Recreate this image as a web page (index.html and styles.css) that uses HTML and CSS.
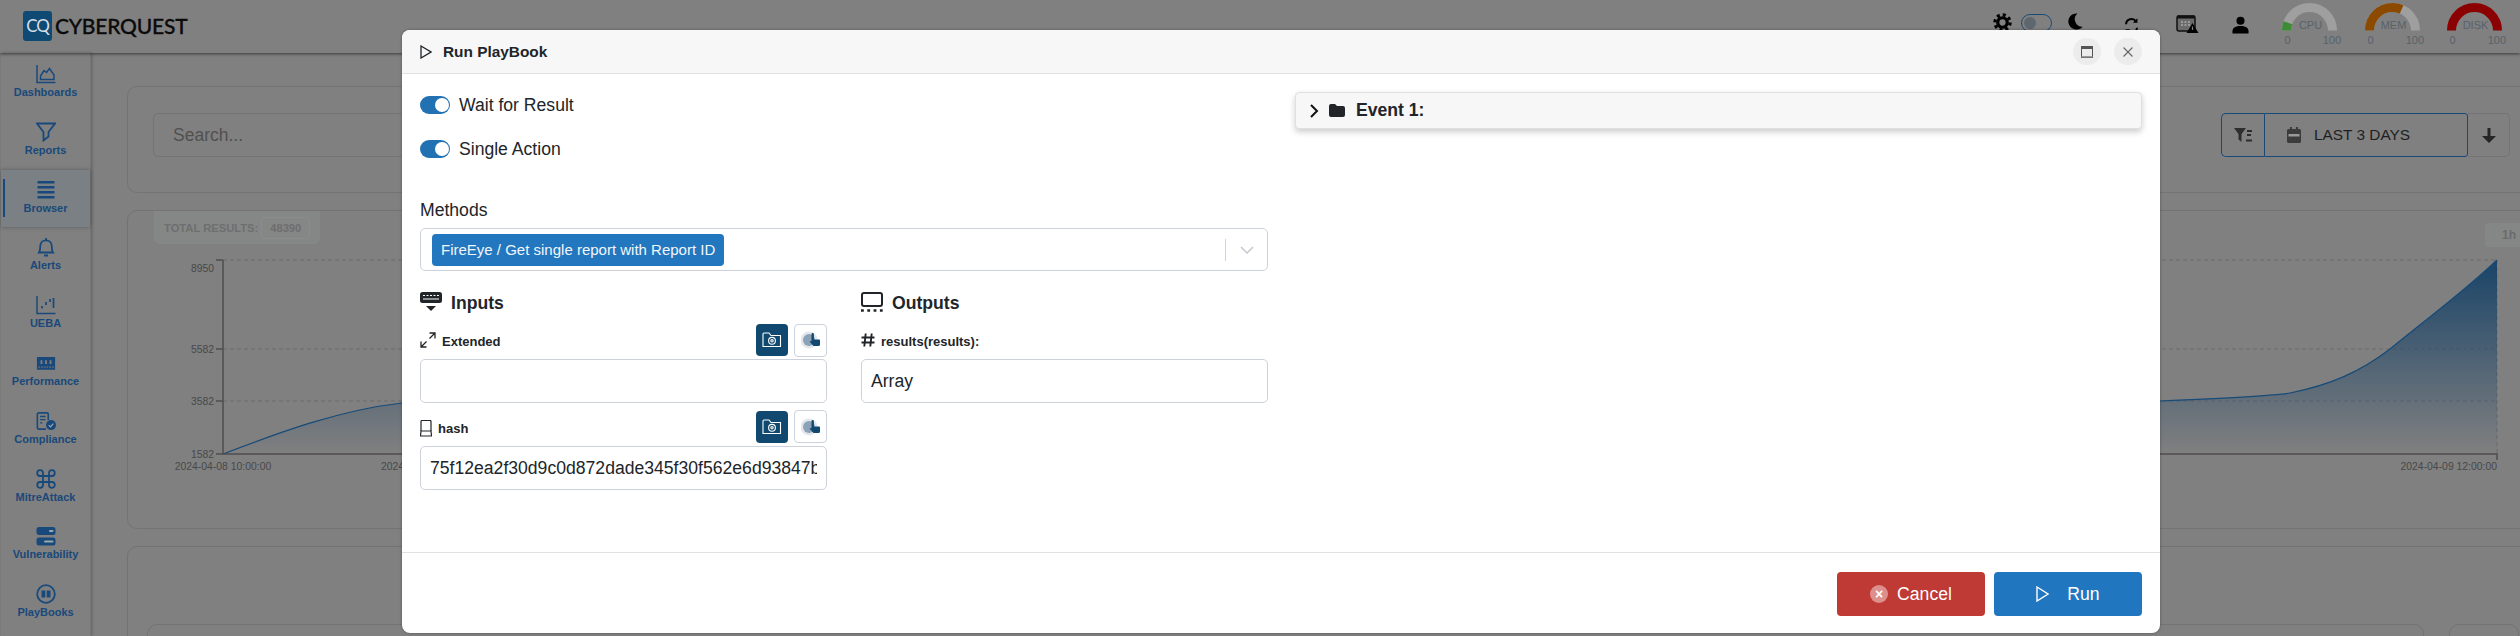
FILE: index.html
```html
<!DOCTYPE html>
<html lang="en">
<head>
<meta charset="utf-8">
<title>CyberQuest</title>
<link rel="stylesheet" href="styles.css">
</head>
<body>
<div class="app">
  <header class="topbar">
    <div class="brand">
      <div class="brand-mark">CQ</div>
      <div class="brand-name">CYBERQUEST</div>
    </div>
    <div class="tools">
      <svg class="tool gear" viewBox="0 0 20 20"><circle cx="10" cy="10" r="5" fill="none" stroke="#000" stroke-width="3.4"/><circle cx="10" cy="10" r="8" fill="none" stroke="#000" stroke-width="3.4" stroke-dasharray="3.2 3.08"/></svg>
      <div class="theme-switch"><span class="theme-knob"></span></div>
      <svg class="tool moon" viewBox="0 0 16 18"><path d="M10 0.500A8.600 8.600 0 1 0 15.600 14.500A8 8 0 0 1 10 0.500Z" fill="#000"/></svg>
      <svg class="tool refresh" viewBox="0 0 16 22" fill="none" stroke="#000" stroke-width="2.2"><path d="M2 9A6 6 0 0 1 13 6"/><path d="M14 13A6 6 0 0 1 3 16"/><path d="M14.500 2.500V7.500H9.500Z" fill="#000" stroke="none"/><path d="M1.500 19.500V14.500H6.500Z" fill="#000" stroke="none"/></svg>
      <svg class="tool cal-alert" viewBox="0 0 23 19"><rect x="1" y="2" width="18" height="15" rx="2" fill="#6b6b6b" stroke="#111" stroke-width="1.5"/><rect x="1" y="1.500" width="18" height="3" fill="#111"/><path d="M5 8h2M8.500 8h2M12 8h2M5 11h2M8.500 11h2M12 11h2" stroke="#aaa" stroke-width="1.500"/><path d="M16.500 9L22.500 19H10.500Z" fill="#000"/><path d="M16.500 12.500V16" stroke="#808080" stroke-width="1.200"/></svg>
      <svg class="tool user" viewBox="0 0 18 18"><circle cx="9" cy="4.500" r="4.300"/><path d="M0.500 18V15.500C0.500 11.500 4 10 9 10S17.500 11.500 17.500 15.500V18Z"/></svg>
      <svg class="gauge gauge-cpu" viewBox="0 0 60 46"><path class="gauge-track" d="M4.500 27.500A23 23 0 0 1 50.500 27.500"/><path class="gauge-cpu-v" d="M4.500 27.500A23 23 0 0 1 50.500 27.500" pathLength="100" stroke-dasharray="11 100"/><text class="gauge-label" x="28.500" y="26" text-anchor="middle">CPU</text><text class="gauge-tick" x="5.500" y="41" text-anchor="middle">0</text><text class="gauge-tick" x="59" y="41" text-anchor="end">100</text></svg>
      <svg class="gauge gauge-mem" viewBox="0 0 60 46"><path class="gauge-track" d="M4.500 27.500A23 23 0 0 1 50.500 27.500"/><path class="gauge-mem-v" d="M4.500 27.500A23 23 0 0 1 50.500 27.500" pathLength="100" stroke-dasharray="63 100"/><text class="gauge-label" x="28.500" y="26" text-anchor="middle">MEM</text><text class="gauge-tick" x="5.500" y="41" text-anchor="middle">0</text><text class="gauge-tick" x="59" y="41" text-anchor="end">100</text></svg>
      <svg class="gauge gauge-disk" viewBox="0 0 60 46"><path class="gauge-disk-v" d="M4.500 27.500A23 23 0 0 1 50.500 27.500"/><text class="gauge-label" x="28.500" y="26" text-anchor="middle">DISK</text><text class="gauge-tick" x="5.500" y="41" text-anchor="middle">0</text><text class="gauge-tick" x="59" y="41" text-anchor="end">100</text></svg>
    </div>
  </header>

  <div class="workspace">
    <nav class="sidebar">
      <a class="nav-item">
        <svg class="nav-icon" viewBox="0 0 20 20" fill="none" stroke="currentColor" stroke-width="1.500"><path d="M1 1V18.500H19.500"/><path d="M4.500 15.500V12L8 6.500L10.500 8.500L13.500 4.500L18 11V15.500Z"/></svg>
        <span class="nav-label">Dashboards</span>
      </a>
      <a class="nav-item">
        <svg class="nav-icon" viewBox="0 0 20 20" fill="none" stroke="currentColor" stroke-width="1.800"><path d="M1 1.500H19L12.500 10V14.500L7.500 18.500V10Z"/></svg>
        <span class="nav-label">Reports</span>
      </a>
      <a class="nav-item nav-active">
        <svg class="nav-icon" viewBox="0 0 20 20" fill="currentColor"><rect x="1.500" y="1" width="17" height="2.500"/><rect x="1.500" y="6" width="17" height="2.500"/><rect x="1.500" y="11" width="17" height="2.500"/><rect x="1.500" y="16" width="17" height="2.500"/></svg>
        <span class="nav-label">Browser</span>
      </a>
      <a class="nav-item">
        <svg class="nav-icon" viewBox="0 0 20 20" fill="none" stroke="currentColor" stroke-width="1.800"><path d="M3 15.500C4.500 13.500 4 11 4.300 8.500C4.600 5.500 7 3.300 10 3.300S15.400 5.500 15.700 8.500C16 11 15.500 13.500 17 15.500Z"/><path d="M10 1V3" /><path d="M8 18.500H12" stroke-width="2"/></svg>
        <span class="nav-label">Alerts</span>
      </a>
      <a class="nav-item">
        <svg class="nav-icon" viewBox="0 0 20 20" fill="none" stroke="currentColor" stroke-width="1.500"><path d="M1 1V18.500H19.500"/><path d="M6 11V13.500M10 7V10M14 4V7M17.500 3V13" stroke-width="1.700"/></svg>
        <span class="nav-label">UEBA</span>
      </a>
      <a class="nav-item">
        <svg class="nav-icon" viewBox="0 0 22 20"><path d="M1 3.500H21V9.500A2 2 0 0 0 21 11V17.500H1V11A2 2 0 0 0 1 9.500Z" fill="currentColor"/><path d="M5 7H7V11H5ZM10 7H12V11H10ZM15 7H17V11H15Z" fill="#808080"/><path d="M2.500 14.500H19.500" stroke="#808080" stroke-width="1" stroke-dasharray="2 1"/></svg>
        <span class="nav-label">Performance</span>
      </a>
      <a class="nav-item">
        <svg class="nav-icon" viewBox="0 0 22 20"><path d="M11 19H3A1.500 1.500 0 0 1 1.500 17.500V2.500A1.500 1.500 0 0 1 3 1H12A1.500 1.500 0 0 1 13.500 2.500V9" fill="none" stroke="currentColor" stroke-width="1.800"/><path d="M4.500 5H10.500M4.500 8.500H10.500M4.500 12H7" stroke="currentColor" stroke-width="1.500"/><circle cx="16.500" cy="14.500" r="5.500" fill="currentColor"/><path d="M14 14.500L16 16.500L19 13" fill="none" stroke="#9aa" stroke-width="1.300"/></svg>
        <span class="nav-label">Compliance</span>
      </a>
      <a class="nav-item">
        <svg class="nav-icon" viewBox="0 0 20 20" fill="none" stroke="currentColor" stroke-width="1.800"><path d="M7 7V3.800A2.900 2.900 0 1 0 4 7H16A2.900 2.900 0 1 0 13 3.800V16.200A2.900 2.900 0 1 0 16 13H4A2.900 2.900 0 1 0 7 16.200Z"/></svg>
        <span class="nav-label">MitreAttack</span>
      </a>
      <a class="nav-item">
        <svg class="nav-icon" viewBox="0 0 20 20"><rect x="0.500" y="1" width="19" height="8" rx="2.500" fill="currentColor"/><rect x="0.500" y="11.500" width="19" height="8" rx="2.500" fill="currentColor"/><rect x="13" y="4" width="4.500" height="2" rx="1" fill="#9aa"/><rect x="8" y="14.500" width="9.500" height="2" rx="1" fill="#9aa"/></svg>
        <span class="nav-label">Vulnerability</span>
      </a>
      <a class="nav-item">
        <svg class="nav-icon" viewBox="0 0 20 20"><circle cx="10" cy="10" r="8.800" fill="none" stroke="currentColor" stroke-width="1.800"/><path d="M5.500 6.500H9.300V13.500H5.500ZM10.700 6.500H14.500V13.500H10.700Z" fill="currentColor"/></svg>
        <span class="nav-label">PlayBooks</span>
      </a>
    </nav>

    <main class="content">
      <section class="card card-search">
        <div class="search-box">Search...</div>
        <div class="range-group">
          <div class="range-filter">
            <svg class="range-funnel" viewBox="0 0 18 14"><path d="M0 0H12L7.500 6V14L4.500 11.500V6Z" fill="#2d2d2d"/><path d="M13 3H18M13 7H17M12 12.500H18" stroke="#2d2d2d" stroke-width="1.800"/></svg>
          </div>
          <div class="range-date">
            <svg class="range-cal" viewBox="0 0 14 16"><path d="M1.500 2H3V0H5V2H9V0H11V2H12.500A1.500 1.500 0 0 1 14 3.500V14.500A1.500 1.500 0 0 1 12.500 16H1.500A1.500 1.500 0 0 1 0 14.500V3.500A1.500 1.500 0 0 1 1.500 2Z" fill="#3c3c3c"/><rect x="1.500" y="7" width="11" height="2.500" fill="#9a9a9a"/></svg>
            <span>LAST 3 DAYS</span>
          </div>
          <div class="range-down">
            <svg class="range-arrow" viewBox="0 0 14 15"><path d="M5.500 0H8.500V8H14L7 15L0 8H5.500Z" fill="#262626"/></svg>
          </div>
        </div>
      </section>

      <section class="card card-chart">
        <div class="chart-head">
          <div class="total-box"><span>TOTAL RESULTS:</span><span class="total-count">48390</span></div>
          <div class="interval">1h</div>
        </div>
        <svg class="chart" viewBox="150 250 2370 225" width="2370" height="225">
          <defs>
            <linearGradient id="areaFill" gradientUnits="userSpaceOnUse" x1="0" y1="260" x2="0" y2="454">
              <stop offset="0" stop-color="#1a4468"/>
              <stop offset="1" stop-color="#1a4468" stop-opacity="0"/>
            </linearGradient>
          </defs>
          <path class="grid" d="M223 260H2497M223 349H2497M223 401H2497M2497 260V454"/>
          <path class="area" d="M223 454C280 432 340 410 402 403L1200 402L2160 401C2230 398 2275 396 2290 393C2330 385 2360 372 2390 349C2430 316 2460 295 2497 260V454Z"/>
          <path class="line" d="M223 454C280 432 340 410 402 403L1200 402L2160 401C2230 398 2275 396 2290 393C2330 385 2360 372 2390 349C2430 316 2460 295 2497 260"/>
          <path class="axis" d="M223 260V454H2497V460M216 260H223M216 349H223M216 401H223M216 454H223"/>
          <text class="tick" x="214" y="272" text-anchor="end">8950</text>
          <text class="tick" x="214" y="353" text-anchor="end">5582</text>
          <text class="tick" x="214" y="405" text-anchor="end">3582</text>
          <text class="tick" x="214" y="458" text-anchor="end">1582</text>
          <text class="tick" x="223" y="470" text-anchor="middle">2024-04-08 10:00:00</text>
          <text class="tick" x="381" y="470">2024-04-08 14:00:00</text>
          <text class="tick" x="2497" y="470" text-anchor="end">2024-04-09 12:00:00</text>
        </svg>
      </section>

      <section class="card card-lower">
        <div class="lower-row">
          <div class="lower-main"></div>
          <div class="lower-side"></div>
        </div>
      </section>
    </main>
  </div>

  <div class="modal">
    <div class="modal-head">
      <svg class="modal-play" viewBox="0 0 12 14" fill="none" stroke="#212529" stroke-width="1.300"><path d="M1 1L11 7L1 13Z"/></svg>
      <div class="modal-title">Run PlayBook</div>
      <button class="head-btn">
        <svg class="head-icon" viewBox="0 0 12 12"><rect x="0.500" y="0.500" width="11" height="11" fill="none" stroke="#555" stroke-width="1"/><rect x="0.500" y="0.500" width="11" height="2.500" fill="#555"/><rect x="0.500" y="10" width="11" height="1.500" fill="#999"/></svg>
      </button>
      <button class="head-btn">
        <svg class="head-icon" viewBox="0 0 12 12"><path d="M1.500 1.500L10.500 10.500M10.500 1.500L1.500 10.500" stroke="#666" stroke-width="1.100"/></svg>
      </button>
    </div>
    <div class="modal-body">
      <div class="form-col">
        <div class="toggle-row"><span class="toggle"><span class="toggle-knob"></span></span><span>Wait for Result</span></div>
        <div class="toggle-row"><span class="toggle"><span class="toggle-knob"></span></span><span>Single Action</span></div>
        <div class="field-title">Methods</div>
        <div class="select">
          <span class="chip">FireEye / Get single report with Report ID</span>
          <span class="select-sep"></span>
          <svg class="select-chevron" viewBox="0 0 14 8" fill="none" stroke="#c7cbd1" stroke-width="1.600"><path d="M1 1L7 7L13 1"/></svg>
        </div>
        <div class="io-grid">
          <div>
            <div class="io-head">
              <svg class="io-icon" viewBox="0 0 22 20"><rect x="0" y="0" width="22" height="11" rx="2.500" fill="#212529"/><path d="M3 3.500H5M6.500 3.500H8.500M10 3.500H12M13.500 3.500H15.500M17 3.500H19M3 7H19" stroke="#fff" stroke-width="1.200"/><path d="M6 14H16L11 19Z" fill="#212529"/></svg>
              <span class="io-text">Inputs</span>
            </div>
            <div class="param-row">
              <svg class="param-icon" viewBox="0 0 16 16" fill="none" stroke="#212529" stroke-width="1.300"><path d="M1 15L6.500 9.500M9.500 6.500L15 1M9.500 1H15V6.500M1 9.500V15H6.500"/></svg>
              <span class="param-name">Extended</span>
              <button class="src-btn src-dark"><svg class="src-icon" viewBox="0 0 20 18" fill="none" stroke="#fff" stroke-width="1.100"><path d="M1 3V15.500H18.500V4.500H9L7 2H2A1 1 0 0 0 1 3Z"/><circle cx="10" cy="9.800" r="3.400"/><circle cx="10" cy="9.800" r="1.200"/></svg></button>
              <button class="src-btn src-light"><svg class="src-icon" viewBox="0 0 20 18"><circle cx="8" cy="9" r="8.500" fill="#e3e7ec"/><circle cx="8" cy="9" r="6" fill="#8ca2b8"/><path d="M10.500 3.300A1.200 1.200 0 0 1 12.900 3.300V8.500H18A1 1 0 0 1 19 9.500V13.500A1.500 1.500 0 0 1 17.500 15H12.500L8.500 10.500L10.500 10Z" fill="#114870"/></svg></button>
            </div>
            <input class="text-input" type="text" readonly value="">
            <div class="param-row param-next">
              <svg class="param-icon param-icon-narrow" viewBox="0 0 12 17" fill="none" stroke="#212529" stroke-width="1.200"><path d="M1 11V1.500A1 1 0 0 1 2 0.500H10A1 1 0 0 1 11 1.500V11"/><path d="M1 11H11L11.500 16H0.500Z"/></svg>
              <span class="param-name">hash</span>
              <button class="src-btn src-dark"><svg class="src-icon" viewBox="0 0 20 18" fill="none" stroke="#fff" stroke-width="1.100"><path d="M1 3V15.500H18.500V4.500H9L7 2H2A1 1 0 0 0 1 3Z"/><circle cx="10" cy="9.800" r="3.400"/><circle cx="10" cy="9.800" r="1.200"/></svg></button>
              <button class="src-btn src-light"><svg class="src-icon" viewBox="0 0 20 18"><circle cx="8" cy="9" r="8.500" fill="#e3e7ec"/><circle cx="8" cy="9" r="6" fill="#8ca2b8"/><path d="M10.500 3.300A1.200 1.200 0 0 1 12.900 3.300V8.500H18A1 1 0 0 1 19 9.500V13.500A1.500 1.500 0 0 1 17.500 15H12.500L8.500 10.500L10.500 10Z" fill="#114870"/></svg></button>
            </div>
            <input class="text-input" type="text" readonly value="75f12ea2f30d9c0d872dade345f30f562e6d93847b2c41e09a">
          </div>
          <div>
            <div class="io-head">
              <svg class="io-icon" viewBox="0 0 22 20"><rect x="1" y="1" width="20" height="13" rx="2" fill="none" stroke="#212529" stroke-width="2"/><path d="M0 18.500H22" stroke="#212529" stroke-width="2.600" stroke-dasharray="2.800 3.500"/></svg>
              <span class="io-text">Outputs</span>
            </div>
            <div class="param-row">
              <svg class="param-icon param-icon-hash" viewBox="0 0 14 14" fill="none" stroke="#212529" stroke-width="1.900"><path d="M4.700 0.500L3.300 13.500M10.700 0.500L9.300 13.500M0.500 4.500H13.500M0.500 9.500H13.500"/></svg>
              <span class="param-name">results(results):</span>
            </div>
            <input class="text-input" type="text" readonly value="Array">
          </div>
        </div>
      </div>
      <div class="event-col">
        <div class="event-panel">
          <svg class="event-chevron" viewBox="0 0 10 14" fill="none" stroke="#111" stroke-width="2"><path d="M2 1L8 7L2 13"/></svg>
          <svg class="event-folder" viewBox="0 0 16 13"><path d="M0 2A2 2 0 0 1 2 0H6L8 2H14A2 2 0 0 1 16 4V11A2 2 0 0 1 14 13H2A2 2 0 0 1 0 11Z" fill="#212529"/></svg>
          <span>Event 1:</span>
        </div>
      </div>
    </div>
    <div class="modal-foot">
      <button class="action action-cancel"><span class="cancel-dot">×</span><span>Cancel</span></button>
      <button class="action action-run">
        <svg class="run-icon" viewBox="0 0 13 16" fill="none" stroke="#fff" stroke-width="1.400"><path d="M1 1L12 8L1 15Z"/></svg>
        <span>Run</span>
      </button>
    </div>
  </div>
</div>
</body>
</html>
```

FILE: styles.css
```css
* { box-sizing: border-box; }

html, body {
  margin: 0;
  padding: 0;
  width: 2520px;
  height: 636px;
  overflow: hidden;
  background: #808080;
  font-family: "Liberation Sans", Arial, sans-serif;
}

.app {
  position: relative;
  width: 2520px;
  height: 636px;
  overflow: hidden;
  background: #808080;
}

/* top bar */
.topbar {
  display: flex;
  justify-content: space-between;
  height: 53px;
  padding: 11px 13px 0 23px;
  box-shadow: 0 1px 3px rgba(0, 0, 0, .55);
  position: relative;
  z-index: 1;
}

.brand { display: flex; height: 30px; gap: 3px; }

.brand-mark {
  width: 29px;
  height: 30px;
  border-radius: 3px;
  background: #0f4a75;
  color: #d7dfe6;
  font: 400 17px/30px "Lato", sans-serif;
  letter-spacing: -1px;
  text-align: center;
}

.brand-name {
  font: 500 21px/30px "Lato", sans-serif;
  color: #0b0b0b;
  letter-spacing: -.2px;
  -webkit-text-stroke: .3px #0b0b0b;
}

.tools { display: flex; margin-top: -11px; align-items: flex-start; }

.tool { display: block; flex: none; }
.gear { width: 19px; height: 19px; margin-top: 13px; }
.theme-switch {
  width: 31px;
  height: 18px;
  margin: 14px 0 0 9px;
  padding: 2px;
  border: 1px solid #1a4b78;
  border-radius: 9px;
}
.theme-knob {
  display: block;
  width: 12px;
  height: 12px;
  border-radius: 50%;
  background: #5e666e;
}
.moon { width: 15px; height: 17px; margin: 13px 0 0 16px; }
.refresh { width: 15px; height: 20px; margin: 16px 0 0 41px; }
.cal-alert { width: 23px; height: 19px; margin: 14px 0 0 37px; }
.user { width: 17px; height: 18px; fill: #000; margin: 16px 0 0 33px; }

.gauge { display: block; flex: none; width: 60px; height: 46px; margin-top: 3px; fill: none; }
.gauge-cpu { margin-left: 33px; }
.gauge-mem { margin-left: 23px; }
.gauge-disk { margin-left: 22px; }
.gauge-track { stroke: #9f9f9f; stroke-width: 9; }
.gauge-cpu-v { stroke: #3c8b35; stroke-width: 9; }
.gauge-mem-v { stroke: #8b4a00; stroke-width: 9; }
.gauge-disk-v { stroke: #8b0000; stroke-width: 9; }
.gauge-label, .gauge-tick { font-size: 11px; fill: #58626b; }

/* workspace */
.workspace { display: flex; height: 583px; }

.sidebar {
  flex: none;
  width: 90px;
  margin-left: 1px;
  padding-top: 1px;
  border-right: 1px solid #767676;
  box-shadow: 1px 0 3px rgba(0, 0, 0, .25);
  display: flex;
  flex-direction: column;
}

.nav-item {
  flex: none;
  height: 57.800px;
  padding-top: 10px;
  display: flex;
  flex-direction: column;
  align-items: center;
  color: #18497a;
  position: relative;
}

.nav-active {
  background: #7a8083;
  box-shadow: 0 0 4px rgba(0, 0, 0, .3);
}

.nav-active::before {
  content: "";
  position: absolute;
  left: 2px;
  top: 9px;
  width: 2px;
  height: 38px;
  background: #18497a;
}

.nav-icon { display: block; width: 20px; height: 20px; }
.nav-label { font-size: 11px; font-weight: 700; line-height: 14px; margin-top: 1px; }

.content {
  flex: none;
  width: 2460px;
  padding: 33px 0 0 36px;
}

.card {
  border: 1px solid #737373;
  border-radius: 10px;
  width: 2424px;
}

.card-search {
  display: flex;
  justify-content: space-between;
  height: 107px;
  padding: 26px 40px 0 25px;
}

.search-box {
  width: 1500px;
  height: 44px;
  border: 1px solid #747474;
  border-radius: 5px;
  padding: 0 19px;
  font-size: 17.500px;
  line-height: 42px;
  color: #505050;
}

.range-group { display: flex; height: 44px; }

.range-filter {
  width: 43px;
  border: 1px solid #174a78;
  border-right: 0;
  border-radius: 5px 0 0 5px;
  display: flex;
  align-items: center;
  justify-content: center;
}
.range-funnel { width: 18px; height: 14px; }

.range-date {
  width: 204px;
  border: 1px solid #174a78;
  border-radius: 0 3px 3px 0;
  display: flex;
  align-items: center;
  padding-left: 22px;
  gap: 13px;
  font-size: 15.400px;
  color: #1f1f1f;
}
.range-cal { width: 14px; height: 16px; }

.range-down {
  width: 42px;
  border: 1px solid #747474;
  border-left: 0;
  border-radius: 0 5px 5px 0;
  display: flex;
  align-items: center;
  justify-content: center;
}
.range-arrow { width: 14px; height: 15px; }

.card-chart {
  margin-top: 17px;
  height: 319px;
  position: relative;
  padding-left: 26px;
}

.chart-head { display: flex; justify-content: space-between; height: 33px; }

.total-box {
  width: 166px;
  height: 33px;
  background: #858787;
  border-radius: 0 0 6px 6px;
  padding-left: 10px;
  display: flex;
  align-items: center;
  gap: 3px;
  font-size: 11.200px;
  font-weight: 700;
  color: #6e6e6e;
}

.total-count {
  width: 49px;
  height: 22px;
  border: 1px solid #8c8c8c;
  border-radius: 4px;
  text-align: center;
  line-height: 20px;
}

.interval {
  width: 65px;
  height: 24px;
  margin-top: 12px;
  padding-left: 17px;
  background: #858787;
  border-radius: 4px;
  font-size: 12px;
  font-weight: 700;
  line-height: 24px;
  color: #6a6a6a;
}

.chart { position: absolute; left: 22px; top: 39px; display: block; }
.grid { fill: none; stroke: #6a6a6a; stroke-dasharray: 4 3; }
.area { fill: url(#areaFill); }
.line { fill: none; stroke: #164a78; stroke-width: 1.200; }
.axis { fill: none; stroke: #4e4e4e; stroke-width: 1.500; }
.tick { font-size: 10.400px; fill: #484848; }

.card-lower { margin-top: 17px; height: 140px; padding: 77px 0 0 19px; }
.lower-row { display: flex; gap: 25px; }
.lower-main, .lower-side { height: 40px; border: 1px solid #737373; border-radius: 10px; }
.lower-main { width: 2277px; }
.lower-side { width: 70px; }

/* modal */
.modal {
  position: absolute;
  z-index: 5;
  left: 402px;
  top: 30px;
  width: 1758px;
  height: 603px;
  background: #fff;
  border-radius: 8px;
  overflow: hidden;
  color: #212529;
  display: flex;
  flex-direction: column;
  box-shadow: 0 0 3px rgba(0, 0, 0, .35);
}

.modal-head {
  flex: none;
  height: 44px;
  padding: 0 18px;
  background: #f7f7f7;
  border-bottom: 1px solid #dfe1e3;
  display: flex;
  align-items: center;
}

.modal-play { width: 12px; height: 14px; margin-right: 11px; }
.modal-title { font-size: 15.400px; font-weight: 700; margin-right: auto; }

.head-btn {
  width: 28px;
  height: 27px;
  padding: 0;
  border: 0;
  border-radius: 14px;
  background: #ececec;
  display: flex;
  align-items: center;
  justify-content: center;
  margin-left: 13px;
}
.head-icon { width: 12px; height: 12px; display: block; }

.modal-body {
  flex: 1;
  display: flex;
  gap: 27px;
  padding: 18px 18px 0;
  border-bottom: 1px solid #dfe1e3;
}

.form-col { width: 848px; flex: none; }
.event-col { flex: 1; }

.toggle-row {
  display: flex;
  align-items: center;
  gap: 9px;
  height: 18px;
  margin: 4px 0 26px;
  font-size: 17.600px;
}

.toggle {
  width: 30px;
  height: 18px;
  border-radius: 9px;
  background: #2272b3;
  padding: 2px 1px 2px 15px;
}
.toggle-knob { display: block; width: 14px; height: 14px; border-radius: 50%; background: #fff; }

.field-title { margin-top: 41px; font-size: 17.600px; line-height: 22px; margin-bottom: 7px; }

.select {
  height: 43px;
  border: 1px solid #cdd2da;
  border-radius: 5px;
  display: flex;
  align-items: center;
  padding-left: 11px;
}

.chip {
  height: 32px;
  padding: 0 9px;
  background: #2277bf;
  border-radius: 4px;
  color: #f2f6fa;
  font-size: 15px;
  line-height: 32px;
  margin-right: auto;
}

.select-sep { width: 1px; height: 22px; background: #cfd3d8; margin-right: 14px; }
.select-chevron { width: 14px; height: 8px; margin-right: 13px; }

.io-grid { display: grid; grid-template-columns: 407px 407px; column-gap: 34px; margin-top: 20px; }

.io-head {
  display: flex;
  align-items: center;
  gap: 9px;
  height: 22px;
  font-size: 17.600px;
  font-weight: 700;
}
.io-text { padding-top: 2px; }
.io-icon { width: 22px; height: 20px; display: block; }

.param-row {
  display: flex;
  align-items: center;
  height: 32px;
  margin-top: 11px;
  margin-bottom: 3px;
  font-size: 13px;
  font-weight: 700;
  gap: 6px;
}
.param-next { margin-top: 7px; height: 33px; }
.param-icon { width: 16px; height: 16px; display: block; flex: none; }
.param-icon-narrow { width: 12px; height: 17px; margin-top: 3px; }
.param-icon-hash { width: 14px; height: 14px; }
.param-name { margin-right: auto; padding-top: 3px; }

.src-btn {
  width: 33px;
  height: 33px;
  padding: 0;
  border-radius: 4px;
  display: flex;
  align-items: center;
  justify-content: center;
}
.src-dark { background: #114870; border: 0; width: 32px; height: 32px; }
.src-light { background: #fff; border: 1px solid #cdd2da; }
.src-icon { width: 20px; height: 18px; display: block; }

.text-input {
  display: block;
  width: 100%;
  height: 44px;
  padding: 0 9px;
  border: 1px solid #cdd2da;
  border-radius: 5px;
  font: 400 17.600px "Liberation Sans", Arial, sans-serif;
  color: #212529;
  background: #fff;
  outline: none;
}

.event-panel {
  height: 37px;
  background: #f7f7f7;
  border: 1px solid #e0e0e0;
  border-radius: 4px;
  box-shadow: 0 3px 6px rgba(0, 0, 0, .2);
  display: flex;
  align-items: center;
  padding-left: 13px;
  font-size: 17.600px;
  font-weight: 700;
  color: #212529;
}
.event-chevron { width: 10px; height: 14px; margin-right: 10px; }
.event-folder { width: 16px; height: 13px; margin-right: 11px; }

.modal-foot {
  flex: none;
  height: 80px;
  display: flex;
  justify-content: flex-end;
  gap: 9px;
  padding: 19px 18px 0;
}

.action {
  width: 148px;
  height: 44px;
  border: 0;
  border-radius: 4px;
  color: #fff;
  font: 400 17.600px "Liberation Sans", Arial, sans-serif;
  display: flex;
  align-items: center;
  justify-content: center;
}
.action-cancel { background: #bf3a35; gap: 9px; }
.action-run { background: #2177bf; gap: 18px; }

.cancel-dot {
  width: 18px;
  height: 18px;
  border-radius: 50%;
  background: #dc8f8c;
  font-size: 14px;
  font-weight: 700;
  line-height: 18px;
  text-align: center;
}
.run-icon { width: 13px; height: 16px; }
```
